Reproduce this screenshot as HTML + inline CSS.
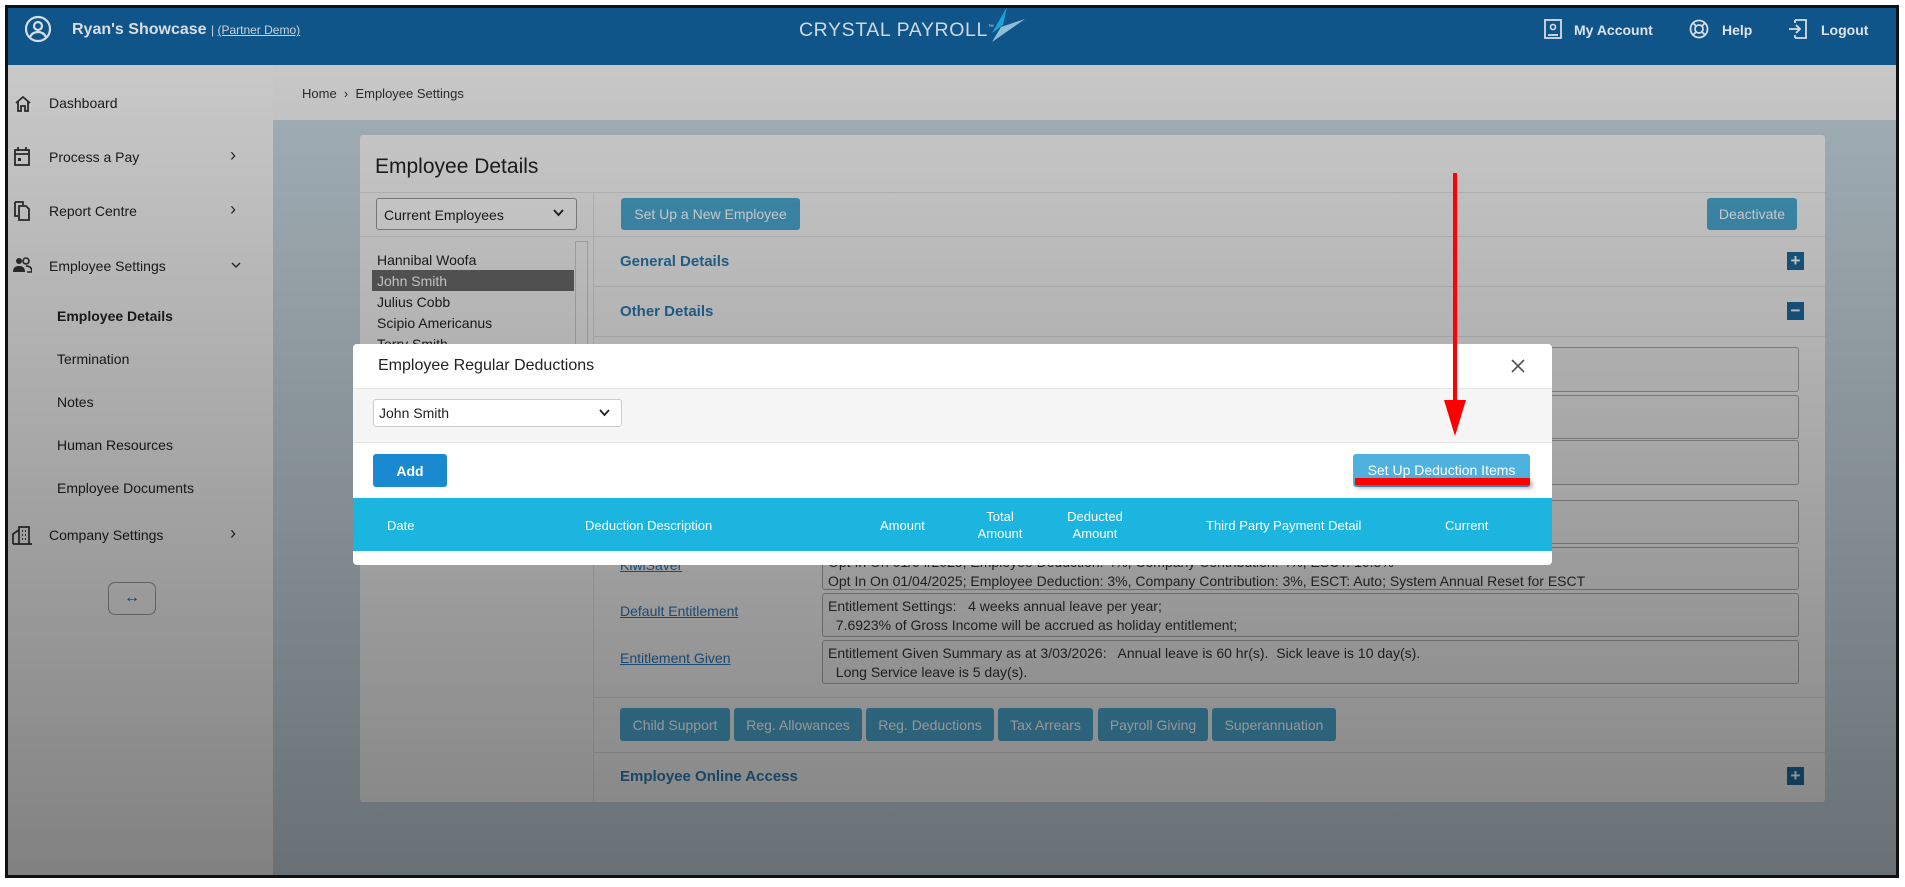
<!DOCTYPE html>
<html><head><meta charset="utf-8"><style>
*{box-sizing:border-box;margin:0;padding:0}
body{width:1905px;height:887px;background:#fff;font-family:"Liberation Sans",sans-serif;position:relative;overflow:hidden}
.a{position:absolute}
#frame{left:5px;top:5px;width:1894px;height:873px;border:3px solid #111;overflow:hidden;background:#c4d3dc}
.t{position:absolute;white-space:nowrap}
.btn{position:absolute;background:#4ba7d0;color:#fff;font-size:14px;border-radius:3px;display:flex;align-items:center;justify-content:center}
.ta{position:absolute;left:822px;width:977px;border:1px solid #aaa;border-radius:3px;background:#f0f0f0;font-size:14px;color:#333;padding:3px 5px;line-height:19px}
.lnk{position:absolute;left:620px;color:#2a76b6;text-decoration:underline;font-size:14px}
.sb{position:absolute;color:#222;font-size:14px}
.ch{position:absolute;left:230px;font-size:18px;color:#333}
.pm{position:absolute;left:1787px;width:17px;height:18px;background:#1d6a9e;color:#fff;font-weight:bold;font-size:17px;line-height:17px;text-align:center}
</style></head><body>
<div id="frame" class="a">
<div style="position:absolute;left:-8px;top:-8px;width:1905px;height:887px">
 <div class="a" style="left:0;top:0;width:1905px;height:65px;background:#10558a"></div>
 <svg class="a" style="left:24px;top:15px" width="28" height="28" viewBox="0 0 28 28"><circle cx="14" cy="14" r="12" fill="none" stroke="#d6dde4" stroke-width="2.2"/><circle cx="14" cy="11" r="4" fill="none" stroke="#d6dde4" stroke-width="2.2"/><path d="M6 22c2-4 5-5 8-5s6 1 8 5" fill="none" stroke="#d6dde4" stroke-width="2.2"/></svg>
 <div class="t" style="left:72px;top:21px;font-size:16px;font-weight:bold;color:#d8dee4">Ryan's Showcase</div>
 <div class="t" style="left:211px;top:23px;font-size:12px;color:#c9d3dc">| <span style="text-decoration:underline">(Partner Demo)</span></div>
 <div class="t" style="left:799px;top:19px;font-size:19.5px;color:#d0d8e0;letter-spacing:0.6px">CRYSTAL PAYROLL<sup style="font-size:6px">™</sup></div>
 <svg class="a" style="left:987px;top:7px" width="40" height="36" viewBox="0 0 40 36"><path d="M20 0L5 26L16 18Z" fill="#1aa3d6"/><path d="M38 12L14 20L5 35Z" fill="#8fbfd6"/></svg>
 <svg class="a" style="left:1544px;top:19px" width="18" height="20" viewBox="0 0 18 20"><rect x="1" y="1" width="16" height="18" fill="none" stroke="#d6dde4" stroke-width="1.8"/><circle cx="9" cy="8" r="2.5" fill="none" stroke="#d6dde4" stroke-width="1.6"/><path d="M4 16h10" stroke="#d6dde4" stroke-width="1.8"/></svg>
 <div class="t" style="left:1574px;top:22px;font-size:14px;font-weight:bold;color:#dde3e8">My Account</div>
 <svg class="a" style="left:1689px;top:19px" width="20" height="20" viewBox="0 0 20 20"><circle cx="10" cy="10" r="8.5" fill="none" stroke="#d6dde4" stroke-width="1.8"/><circle cx="10" cy="10" r="4" fill="none" stroke="#d6dde4" stroke-width="1.8"/><path d="M4 4l3 3M16 4l-3 3M4 16l3-3M16 16l-3-3" stroke="#d6dde4" stroke-width="1.8"/></svg>
 <div class="t" style="left:1722px;top:22px;font-size:14px;font-weight:bold;color:#dde3e8">Help</div>
 <svg class="a" style="left:1788px;top:19px" width="20" height="20" viewBox="0 0 20 20"><path d="M7 1h11v18H7M7 4V1M7 19v-3" fill="none" stroke="#d6dde4" stroke-width="1.8"/><path d="M1 10h11M8 6l4 4-4 4" fill="none" stroke="#d6dde4" stroke-width="1.8"/></svg>
 <div class="t" style="left:1821px;top:22px;font-size:14px;font-weight:bold;color:#dde3e8">Logout</div>

 <div class="a" style="left:0;top:65px;width:273px;height:822px;background:#f2f2f2"></div>
 <div class="a" style="left:273px;top:65px;width:1632px;height:55px;background:#f0f0f0"></div>
 <div class="t" style="left:302px;top:86px;font-size:13px;color:#333">Home &nbsp;›&nbsp; Employee Settings</div>
 <svg class="a" style="left:14px;top:95px" width="18" height="17" viewBox="0 0 18 17"><path d="M2 8L9 2l7 6M4 7v9h3v-5h4v5h3V7" fill="none" stroke="#333" stroke-width="1.8"/></svg>
 <div class="sb" style="left:49px;top:95px">Dashboard</div>
 <svg class="a" style="left:14px;top:147px" width="16" height="19" viewBox="0 0 16 19"><rect x="1" y="3" width="14" height="15" fill="none" stroke="#333" stroke-width="1.8"/><path d="M1 7h14M4 0v4M12 0v4" stroke="#333" stroke-width="1.8"/><rect x="4" y="11" width="3" height="3" fill="#333"/></svg>
 <div class="sb" style="left:49px;top:149px">Process a Pay</div><div class="ch" style="top:145px">›</div>
 <svg class="a" style="left:14px;top:201px" width="16" height="20" viewBox="0 0 16 20"><path d="M1 1h8v3M1 1v14h3" fill="none" stroke="#333" stroke-width="1.8"/><path d="M5 5h7l3 3v11H5z" fill="none" stroke="#333" stroke-width="1.8"/></svg>
 <div class="sb" style="left:49px;top:203px">Report Centre</div><div class="ch" style="top:199px">›</div>
 <svg class="a" style="left:13px;top:257px" width="19" height="16" viewBox="0 0 19 16"><circle cx="6" cy="4" r="3" fill="#333"/><circle cx="13" cy="4" r="3" fill="none" stroke="#333" stroke-width="1.6"/><path d="M0 15c0-5 3-6 6-6s6 1 6 6z" fill="#333"/><path d="M13 9c3 0 6 1 6 6h-5" fill="none" stroke="#333" stroke-width="1.6"/></svg>
 <div class="sb" style="left:49px;top:258px">Employee Settings</div>
 <svg class="a" style="left:231px;top:262px" width="10" height="7" viewBox="0 0 10 7"><path d="M1 1l4 4 4-4" fill="none" stroke="#333" stroke-width="1.4"/></svg>
 <div class="sb" style="left:57px;top:308px;font-weight:bold">Employee Details</div>
 <div class="sb" style="left:57px;top:351px">Termination</div>
 <div class="sb" style="left:57px;top:394px">Notes</div>
 <div class="sb" style="left:57px;top:437px">Human Resources</div>
 <div class="sb" style="left:57px;top:480px">Employee Documents</div>
 <svg class="a" style="left:12px;top:526px" width="21" height="19" viewBox="0 0 21 19"><path d="M1 18V8l6-4v14M7 18V1h10v17M1 18h19" fill="none" stroke="#333" stroke-width="1.7"/><path d="M10 5h1M13 5h1M10 9h1M13 9h1M10 13h1M13 13h1" stroke="#333" stroke-width="1.7"/></svg>
 <div class="sb" style="left:49px;top:527px">Company Settings</div><div class="ch" style="top:523px">›</div>
 <div class="a" style="left:108px;top:582px;width:48px;height:33px;border:1px solid #999;border-radius:7px;color:#1d6a9e;font-size:16px;font-weight:bold;text-align:center;line-height:30px">↔</div>

 <div class="a" style="left:360px;top:135px;width:1465px;height:667px;background:#f4f4f4;border-radius:3px"></div>
 <div class="t" style="left:375px;top:155px;font-size:21px;color:#222">Employee Details</div>
 <div class="a" style="left:360px;top:192px;width:1465px;height:1px;background:#ddd"></div>
 <div class="a" style="left:593px;top:192px;width:1px;height:610px;background:#ddd"></div>
 <div class="a" style="left:376px;top:198px;width:201px;height:32px;border:1px solid #999;border-radius:3px;background:#fafafa"></div>
 <div class="t" style="left:384px;top:207px;font-size:14px;color:#222">Current Employees</div>
 <svg class="a" style="left:553px;top:209px" width="11" height="8" viewBox="0 0 11 8"><path d="M1 1l4.5 5L10 1" fill="none" stroke="#222" stroke-width="1.8"/></svg>
 <div class="a" style="left:360px;top:236px;width:233px;height:1px;background:#ddd"></div>
 <div class="a" style="left:575px;top:241px;width:13px;height:105px;border:1px solid #ccc"></div>
 <div class="t" style="left:377px;top:252px;font-size:14px;color:#222">Hannibal Woofa</div>
 <div class="a" style="left:372px;top:270px;width:202px;height:21px;background:#6a6a6a"></div>
 <div class="t" style="left:377px;top:273px;font-size:14px;color:#fff">John Smith</div>
 <div class="t" style="left:377px;top:294px;font-size:14px;color:#222">Julius Cobb</div>
 <div class="t" style="left:377px;top:315px;font-size:14px;color:#222">Scipio Americanus</div>
 <div class="t" style="left:377px;top:336px;font-size:14px;color:#222">Terry Smith</div>
 <div class="btn" style="left:621px;top:198px;width:179px;height:32px">Set Up a New Employee</div>
 <div class="btn" style="left:1707px;top:198px;width:90px;height:32px">Deactivate</div>
 <div class="a" style="left:594px;top:236px;width:1231px;height:1px;background:#ddd"></div>
 <div class="t" style="left:620px;top:253px;font-size:15px;font-weight:bold;color:#2a7ab0">General Details</div>
 <div class="pm" style="top:252px">+</div>
 <div class="a" style="left:594px;top:286px;width:1231px;height:1px;background:#ddd"></div>
 <div class="t" style="left:620px;top:303px;font-size:15px;font-weight:bold;color:#2a7ab0">Other Details</div>
 <div class="pm" style="top:302px">−</div>
 <div class="a" style="left:594px;top:336px;width:1231px;height:1px;background:#ddd"></div>
 <div class="ta" style="top:347px;height:45px"></div>
 <div class="ta" style="top:395px;height:44px"></div>
 <div class="ta" style="top:440px;height:45px"></div>
 <div class="ta" style="top:500px;height:44px"></div>
 <div class="lnk" style="top:557px">KiwiSaver</div>
 <div class="ta" style="top:547px;height:43px;padding-top:5px">Opt In On 01/04/2025; Employee Deduction: 4%, Company Contribution: 4%, ESCT: 10.5%<br>Opt In On 01/04/2025; Employee Deduction: 3%, Company Contribution: 3%, ESCT: Auto; System Annual Reset for ESCT</div>
 <div class="lnk" style="top:603px">Default Entitlement</div>
 <div class="ta" style="top:593px;height:44px">Entitlement Settings: &nbsp; 4 weeks annual leave per year;<br>&nbsp; 7.6923% of Gross Income will be accrued as holiday entitlement;</div>
 <div class="lnk" style="top:650px">Entitlement Given</div>
 <div class="ta" style="top:640px;height:44px">Entitlement Given Summary as at 3/03/2026: &nbsp; Annual leave is 60 hr(s). &nbsp;Sick leave is 10 day(s).<br>&nbsp; Long Service leave is 5 day(s).</div>
 <div class="a" style="left:594px;top:697px;width:1231px;height:1px;background:#ddd"></div>
 <div class="btn" style="left:620px;top:708px;width:110px;height:33px">Child Support</div>
 <div class="btn" style="left:734px;top:708px;width:128px;height:33px">Reg. Allowances</div>
 <div class="btn" style="left:866px;top:708px;width:128px;height:33px">Reg. Deductions</div>
 <div class="btn" style="left:998px;top:708px;width:95px;height:33px">Tax Arrears</div>
 <div class="btn" style="left:1098px;top:708px;width:110px;height:33px">Payroll Giving</div>
 <div class="btn" style="left:1212px;top:708px;width:124px;height:33px">Superannuation</div>
 <div class="a" style="left:594px;top:752px;width:1231px;height:1px;background:#ddd"></div>
 <div class="t" style="left:620px;top:768px;font-size:15px;font-weight:bold;color:#2a7ab0">Employee Online Access</div>
 <div class="pm" style="top:767px">+</div>

 <div class="a" style="left:0;top:65px;width:1905px;height:822px;background:linear-gradient(rgba(0,0,0,0.17),rgba(0,0,0,0.47))"></div>

 <div class="a" style="left:353px;top:344px;width:1199px;height:221px;background:#fff;border-radius:4px;overflow:hidden">
  <div class="t" style="left:25px;top:13px;font-size:16px;color:#222">Employee Regular Deductions</div>
  <svg class="a" style="left:1158px;top:15px" width="14" height="14" viewBox="0 0 14 14"><path d="M1 1l12 12M13 1L1 13" stroke="#555" stroke-width="1.6"/></svg>
  <div class="a" style="left:0;top:44px;width:1199px;height:55px;background:#f5f5f5;border-top:1px solid #e5e5e5;border-bottom:1px solid #e5e5e5"></div>
  <div class="a" style="left:20px;top:55px;width:249px;height:28px;border:1px solid #ccc;border-radius:3px;background:#fff"></div>
  <div class="t" style="left:26px;top:61px;font-size:14px;color:#222">John Smith</div>
  <svg class="a" style="left:246px;top:65px" width="11" height="8" viewBox="0 0 11 8"><path d="M1 1l4.5 5L10 1" fill="none" stroke="#222" stroke-width="1.8"/></svg>
  <div class="btn" style="left:20px;top:110px;width:74px;height:33px;background:#1a8ad0;font-weight:bold">Add</div>
  <div class="btn" style="left:1000px;top:110px;width:177px;height:33px;background:#4fb2de;padding-bottom:2px">Set Up Deduction Items</div>
  <div class="a" style="left:1002px;top:134px;width:175px;height:7px;background:#f00;box-shadow:2px 3px 4px rgba(0,0,0,0.35)"></div>
  <div class="a" style="left:0;top:154px;width:1199px;height:53px;background:#1cb5e0"></div>
  <div class="t" style="left:34px;top:174px;font-size:13px;color:#fff">Date</div>
  <div class="t" style="left:232px;top:174px;font-size:13px;color:#fff">Deduction Description</div>
  <div class="t" style="left:527px;top:174px;font-size:13px;color:#fff">Amount</div>
  <div class="t" style="left:597px;top:164px;width:100px;font-size:13px;color:#fff;text-align:center;line-height:17px">Total<br>Amount</div>
  <div class="t" style="left:692px;top:164px;width:100px;font-size:13px;color:#fff;text-align:center;line-height:17px">Deducted<br>Amount</div>
  <div class="t" style="left:853px;top:174px;font-size:13px;color:#fff">Third Party Payment Detail</div>
  <div class="t" style="left:1092px;top:174px;font-size:13px;color:#fff">Current</div>
 </div>

 <div class="a" style="left:1453px;top:173px;width:4px;height:235px;background:#f00"></div>
 <svg class="a" style="left:1443px;top:398px" width="24" height="40" viewBox="0 0 24 40"><path d="M1 2L12 38L23 2Z" fill="#f00"/></svg>
</div>
</div>
</body></html>
